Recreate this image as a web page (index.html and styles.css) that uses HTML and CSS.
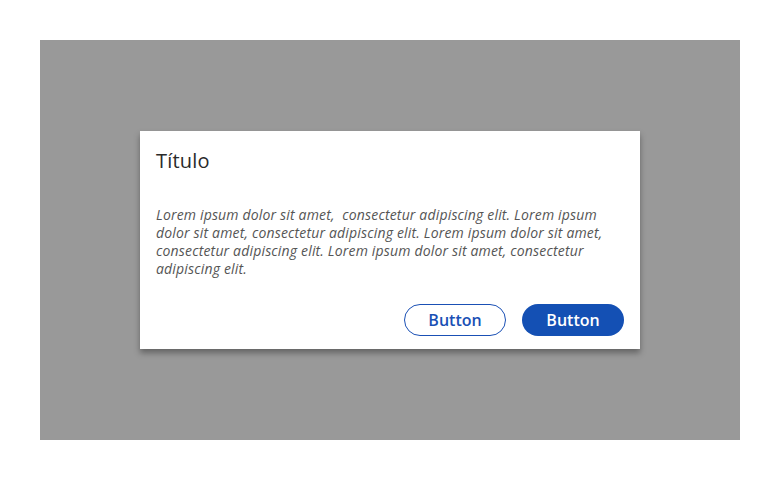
FILE: index.html
```html
<!DOCTYPE html>
<html lang="es">
<head>
<meta charset="utf-8">
<link rel="stylesheet" href="styles.css">
</head>
<body>
<div class="overlay">
  <div class="dialog">
    <h2 class="title">Título</h2>
    <p class="body">Lorem ipsum dolor sit amet,&nbsp; consectetur adipiscing elit. Lorem ipsum dolor sit amet, consectetur adipiscing elit. Lorem ipsum dolor sit amet, consectetur adipiscing elit. Lorem ipsum dolor sit amet, consectetur adipiscing elit.</p>
    <div class="actions">
      <button class="btn btn-outline">Button</button>
      <button class="btn btn-filled">Button</button>
    </div>
  </div>
</div>
</body>
</html>
```
FILE: styles.css
```css
html, body {
  margin: 0;
  padding: 0;
  background: #ffffff;
}
body {
  padding: 40px;
  font-family: "Open Sans", Lato, sans-serif;
}
.overlay {
  width: 700px;
  height: 400px;
  background: #999999;
  display: flex;
  align-items: center;
  justify-content: center;
}
.dialog {
  width: 500px;
  box-sizing: border-box;
  background: #ffffff;
  padding: 18px 16px 13px 16px;
  box-shadow: 0 4px 6px rgba(0,0,0,0.35);
}
.title {
  margin: 0;
  font-size: 20px;
  font-weight: 400;
  line-height: 24px;
  letter-spacing: 0.2px;
  color: #2a2a2a;
}
.body {
  margin: 33px 0 0 0;
  font-size: 14px;
  font-style: italic;
  line-height: 18px;
  letter-spacing: 0.17px;
  color: #555555;
}
.actions {
  display: flex;
  justify-content: flex-end;
  gap: 16px;
  margin-top: 26px;
}
.btn {
  width: 102px;
  height: 32px;
  border-radius: 16px;
  font-family: "Open Sans", sans-serif;
  font-size: 16px;
  font-weight: 600;
  padding: 0;
  box-sizing: border-box;
}
.btn-outline {
  background: #ffffff;
  border: 1px solid #1a50b5;
  color: #1a50b5;
}
.btn-filled {
  background: #1450b4;
  border: none;
  color: #ffffff;
}
```
